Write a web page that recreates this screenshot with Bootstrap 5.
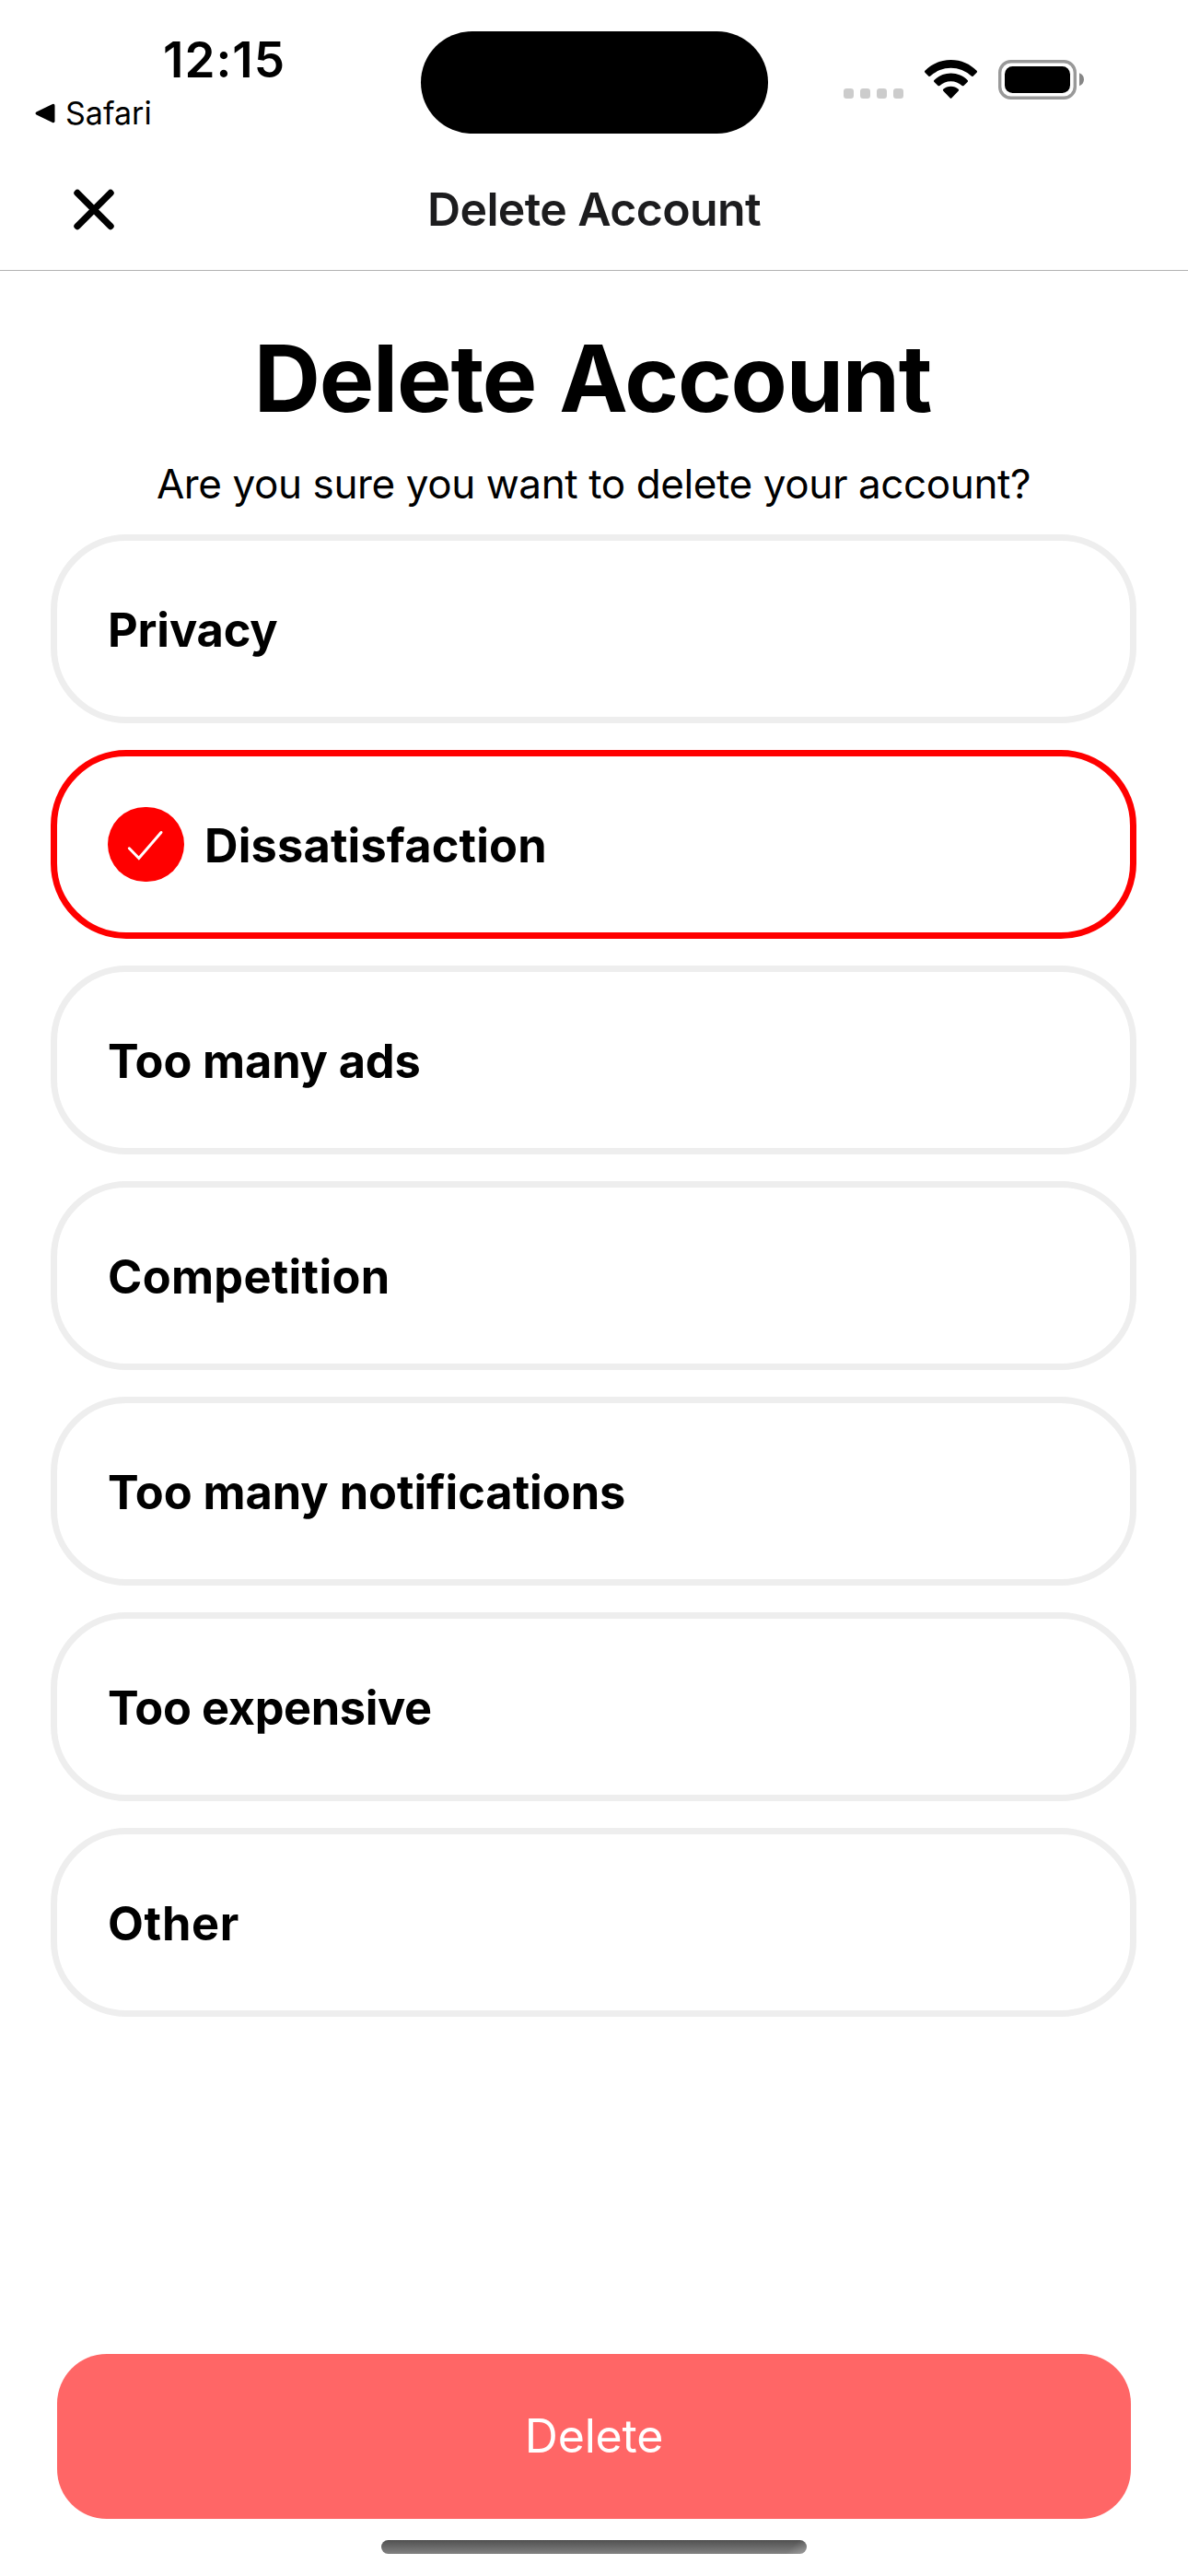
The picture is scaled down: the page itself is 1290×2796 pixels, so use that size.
<!DOCTYPE html>
<html lang="en">
<head>
<meta charset="utf-8">
<meta name="viewport" content="width=device-width, initial-scale=1">
<title>Delete Account</title>
<link href="https://cdn.jsdelivr.net/npm/bootstrap@5.3.0/dist/css/bootstrap.min.css" rel="stylesheet">
<style>
  body { font-family: Inter, "Liberation Sans", sans-serif; color: #000; background: #fff; }
  svg { display: block; flex: none; }
  .screen { height: 2796px; }

  /* Status bar */
  .status { height: 160px; }
  .status-left { width: 457px; padding-top: 35px; }
  .clock { font-size: 53px; font-weight: 600; line-height: 60px; letter-spacing: 1px; padding-left: 177px; }
  .back-app { font-size: 34px; line-height: 40px; letter-spacing: 0; padding-left: 38px; margin-top: 8px; gap: 11px; }
  .island { width: 377px; height: 111px; margin-top: 33.5px; background: #000; }
  .status-right { padding: 65px 0 0 82px; }
  .wifi { margin-left: 22px; }
  .battery { margin-left: 22px; }

  /* Title bar */
  .title-bar { height: 134px; border-bottom: 1px solid #b2b2b2; }
  .close-btn { width: 203px; }
  .title-text { font-size: 50px; font-weight: 600; letter-spacing: -.63px; line-height: 60px; color: #1c1c1e; }

  /* Content */
  .content { padding: 57px 56px 0 55px; }
  .headline { font-size: 100px; font-weight: 700; line-height: 120px; letter-spacing: -1.2px; word-spacing: 2.5px; margin-bottom: 24px; padding-right: 2px; }
  .question { font-size: 44px; line-height: 60px; letter-spacing: -.4px; margin-bottom: 25px; }
  .reasons { gap: 29px; }
  .reason { height: 205px; border: 7px solid #eee; border-radius: 82px; padding: 0 55px; font-size: 50.5px; font-weight: 700; line-height: 60px; letter-spacing: -.15px; background: #fff; color: #000; }
  .reason span { padding-top: 2px; }
  .reason.chosen { border-color: #f00; gap: 22px; letter-spacing: .17px; }
  .spread-none { letter-spacing: -.04px; }
  .spread-tight { letter-spacing: -.4px; }
  .spread-md { letter-spacing: .3px; }
  .spread-lg { letter-spacing: .7px; }

  /* Footer */
  .footer-bar { padding: 0 62px 24px; }
  .delete-btn, .delete-btn:hover { height: 179px; border: 0; border-radius: 54px; background: #f66; color: #fff; font-size: 50px; font-weight: 400; letter-spacing: -.2px; line-height: 60px; }
  .delete-btn span { display: block; padding-bottom: 2px; }
  .home-line { width: 462px; height: 15px; margin-top: 23px; background: linear-gradient(135deg, transparent 95%, rgba(255,255,255,.25)), linear-gradient(#505050, #828282); }
</style>
<script src="https://cdn.jsdelivr.net/npm/bootstrap@5.3.0/dist/js/bootstrap.bundle.min.js" defer></script>
</head>
<body>
<div class="screen d-flex flex-column overflow-hidden">
  <header>
    <div class="status d-flex align-items-start">
      <div class="status-left">
        <div class="clock">12:15</div>
        <div class="back-app d-flex align-items-center">
          <svg width="22" height="22" viewBox="0 0 22 22"><path d="M1.500 9.500 19 1Q21.500 .2 21.500 2.800V19.200Q21.500 21.800 19 21L1.500 12.500Q-.5 11 1.500 9.500Z"/></svg>
          <span>Safari</span>
        </div>
      </div>
      <div class="island rounded-pill"></div>
      <div class="status-right d-flex align-items-start">
        <svg width="66" height="43" viewBox="0 0 66 43" fill="#ccc"><rect y="31" width="11" height="11" rx="3.300"/><rect x="18" y="31" width="11" height="11" rx="3.300"/><rect x="36" y="31" width="11" height="11" rx="3.300"/><rect x="54" y="31" width="11" height="11" rx="3.300"/></svg>
        <svg class="wifi" width="58" height="43" viewBox="0 0 58 43"><path d="M28.500 0C39.700 0 49.500 4.500 56.600 11.800Q57.500 12.800 56.600 13.700L52.600 17.700Q51.700 18.500 50.700 17.600A32.500 32.500 0 0 0 6.300 17.600Q5.300 18.500 4.400 17.700L.4 13.700Q-.5 12.800 .4 11.800C7.500 4.500 17.300 0 28.500 0Z"/><path d="M28.500 14.500C35.600 14.500 42 17.300 46.600 22Q47.500 23 46.600 23.900L42.500 27.900Q41.600 28.800 40.600 27.900A18 18 0 0 0 16.400 27.900Q15.400 28.800 14.500 27.900L10.400 23.900Q9.500 23 10.400 22C15 17.300 21.400 14.500 28.500 14.500Z"/><path d="M28.500 28.800C31.700 28.800 34.500 29.900 36.700 31.800Q37.700 32.800 36.700 33.800L29.500 41.200Q28.500 42.200 27.500 41.200L20.300 33.800Q19.300 32.800 20.300 31.800C22.500 29.900 25.300 28.800 28.500 28.800Z"/></svg>
        <svg class="battery" width="94" height="43" viewBox="0 0 94 43"><rect x="1.700" y="1.700" width="81.600" height="39.600" rx="12" fill="none" stroke="#999" stroke-width="3.400"/><rect x="7" y="7" width="71" height="29" rx="8.500"/><path d="M88 14.300Q93 16.500 93 21.300T88 28.300Z" fill="#868686"/></svg>
      </div>
    </div>
    <div class="title-bar d-flex align-items-center">
      <div class="close-btn d-flex justify-content-center"><svg width="46" height="46" viewBox="0 0 46 46" fill="none" stroke="#000" stroke-width="7.400" stroke-linecap="round"><path d="M5 5.500 41 41.500M41 5.500 5 41.500"/></svg></div>
      <div class="title-text flex-grow-1 text-center">Delete Account</div>
      <div class="close-btn"></div>
    </div>
  </header>

  <main class="content">
    <h1 class="headline text-center">Delete Account</h1>
    <p class="question text-center">Are you sure you want to delete your account?</p>
    <div class="reasons d-flex flex-column">
      <div class="reason d-flex align-items-center"><span>Privacy</span></div>
      <div class="reason chosen d-flex align-items-center">
        <svg width="83" height="81" viewBox="0 0 83 81"><rect width="83" height="81" rx="40.500" fill="#f00"/><path d="M23.300 44.800 33.800 55.500 58 27.500" fill="none" stroke="#fff" stroke-width="3" stroke-linecap="round"/></svg>
        <span>Dissatisfaction</span>
      </div>
      <div class="reason d-flex align-items-center"><span>Too many ads</span></div>
      <div class="reason spread-md d-flex align-items-center"><span>Competition</span></div>
      <div class="reason spread-none d-flex align-items-center"><span>Too many notifications</span></div>
      <div class="reason spread-tight d-flex align-items-center"><span>Too expensive</span></div>
      <div class="reason spread-lg d-flex align-items-center"><span>Other</span></div>
    </div>
  </main>

  <footer class="footer-bar mt-auto">
    <button type="button" class="btn delete-btn d-block w-100 p-0"><span>Delete</span></button>
    <div class="home-line rounded-pill mx-auto"></div>
  </footer>
</div>
</body>
</html>
